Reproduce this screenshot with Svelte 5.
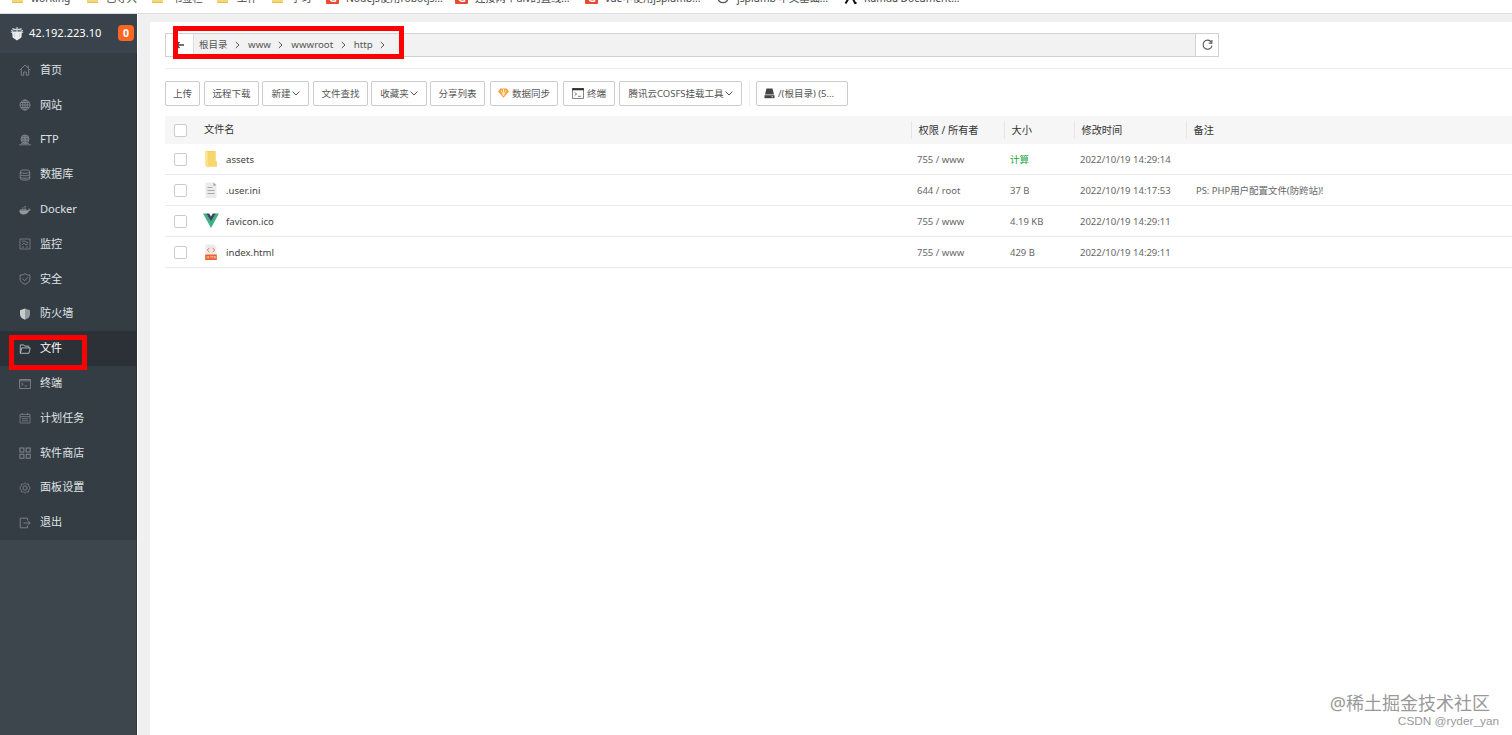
<script>
  const bookmarks = [
    { icon: 'folder', x: 12, w: 75, gap: 8, text: 'working' },
    { icon: 'folder', w: 65, gap: 8, text: '已导入' },
    { icon: 'folder', w: 65, gap: 9, text: '书签栏' },
    { icon: 'folder', w: 55, gap: 9, text: '工作' },
    { icon: 'folder', w: 54, gap: 8, text: '学习' },
    { icon: 'csdn', w: 129, gap: 7, text: 'Nodejs使用robotjs...' },
    { icon: 'csdn', w: 130, gap: 7, text: '连接两个div的直线...' },
    { icon: 'csdn', w: 132, gap: 7, text: 'vue中使用jsplumb...' },
    { icon: 'globe', w: 127, gap: 7, text: 'jsplumb 中文基础...' },
    { icon: 'ramda', w: 130, gap: 7, text: 'Ramda Document...' }
  ];
  const menu = [
    ['home', '首页'],
    ['web', '网站'],
    ['ftp', 'FTP'],
    ['db', '数据库'],
    ['docker', 'Docker'],
    ['monitor', '监控'],
    ['safe', '安全'],
    ['wall', '防火墙'],
    ['files', '文件'],
    ['term', '终端'],
    ['cron', '计划任务'],
    ['soft', '软件商店'],
    ['gear', '面板设置'],
    ['exit', '退出']
  ];
  const crumbs = ['根目录', 'www', 'wwwroot', 'http'];
  const tools = [
    { t: '上传', w: 35, m: 4 },
    { t: '远程下载', w: 55, m: 3 },
    { t: '新建', w: 47, m: 4, drop: true },
    { t: '文件查找', w: 55, m: 3 },
    { t: '收藏夹', w: 56, m: 3, drop: true },
    { t: '分享列表', w: 55, m: 5 },
    { t: '数据同步', w: 68, m: 5, icon: 'gem' },
    { t: '终端', w: 52, m: 4, icon: 'console' },
    { t: '腾讯云COSFS挂载工具', w: 123, m: 7, drop: true }
  ];
  const files = [
    { icon: 'dir', name: 'assets', own: '755 / www', size: '计算', time: '2022/10/19 14:29:14', note: '' },
    { icon: 'txt', name: '.user.ini', own: '644 / root', size: '37 B', time: '2022/10/19 14:17:53', note: 'PS: PHP用户配置文件(防跨站)!' },
    { icon: 'vue', name: 'favicon.ico', own: '755 / www', size: '4.19 KB', time: '2022/10/19 14:29:11', note: '' },
    { icon: 'html', name: 'index.html', own: '755 / www', size: '429 B', time: '2022/10/19 14:29:11', note: '' }
  ];
</script>

{#snippet chevron()}
  <svg class="chev" width="8" height="5" viewBox="0 0 8 5"><path d="M.6 .6 4 4 7.4 .6" fill="none" stroke="#555" /></svg>
{/snippet}

<div class="page">
  <div class="bookmarks">
    {#each bookmarks as b}
      <div class="bm" style:width="{b.w}px">
        <svg width={b.icon === 'folder' ? 11 : 13} height="13" viewBox="0 0 {b.icon === 'folder' ? 11 : 13} 13">
          {#if b.icon === 'folder'}
            <path d="M0 2h5l1 2h5v8H0z" fill="#f5d875" /><path d="M.5 11.500h10" stroke="#e3bd4e" />
          {:else if b.icon === 'csdn'}
            <rect width="13" height="13" rx="1" fill="#ea4a31" />
            <path d="M9.500 4.500C8 3 4 3.500 4 7c0 3.800 4 3.500 5.500 3V7.500H7" fill="none" stroke="#fff" stroke-width="1.500" />
          {:else if b.icon === 'globe'}
            <circle cx="6" cy="6.500" r="5.200" fill="#fff" stroke="#555" stroke-width="1.300" />
            <path d="M2 5l4 3M6 2l4 4-3 2" fill="none" stroke="#555" stroke-width="1.600" />
          {:else}
            <path d="M1.500 12.500 5.500 6M4 1.500h2l5 10.500h1.500" fill="none" stroke="#111" stroke-width="2" />
          {/if}
        </svg>
        <span style:margin-left="{b.gap}px">{b.text}</span>
      </div>
    {/each}
  </div>

  <div class="body">
    <aside>
      <div class="host">
        <svg width="14" height="15" viewBox="0 0 14 15">
          <path d="M2 5.500h10l-.6 6L7 14.500l-4.400-3z" fill="#e9eced" />
          <path d="M1 4.500c3-1 9-1 12 0M2.500 2.500c2.500 1 6.500 1 9 0M7 1v5M.8 6.500 3 5.500M13.200 6.500 11 5.500" fill="none" stroke="#cfd4d8" stroke-width="1.100" />
          <path d="M4.500 7v4M9.500 7v4" stroke="#c2c9ce" stroke-width=".7" />
        </svg>
        <span class="ip">42.192.223.10</span>
        <b class="count">0</b>
      </div>
      <nav>
        {#each menu as [icon, label]}
          <div class="item" class:active={icon === 'files'}>
            <svg width="12" height="12" viewBox="0 0 12 12" fill="none" stroke={icon === 'files' ? '#b9c0c3' : '#7f878c'} stroke-width=".9">
              {#if icon === 'home'}
                <path d="M.8 6.200 6 1l5.200 5.200M2.300 5.200v6h2.400V8h2.600v3.200h2.400v-6M9.200 1.300v2.500" />
              {:else if icon === 'web'}
                <circle cx="6" cy="6" r="5" /><ellipse cx="6" cy="6" rx="2.300" ry="5" /><path d="M1 6h10M1.800 3.500h8.400M1.800 8.500h8.400M6 1v10" />
              {:else if icon === 'ftp'}
                <circle cx="6" cy="5" r="4" fill="#596268" /><path d="M2.200 3.600h7.600M2 6h8M6 1v9M0 10.800h12M2 9.300h8" />
              {:else if icon === 'db'}
                <rect x="1.200" y="1" width="9.600" height="10" rx="2.500" /><path d="M1.200 3.500c2 1 7.600 1 9.600 0M1.200 6c2 1 7.600 1 9.600 0M1.200 8.500c2 1 7.600 1 9.600 0" />
              {:else if icon === 'docker'}
                <path d="M.3 6.200h8.500c1 0 1-1.200.8-2 1 .3 1 1 1 1.300h1.200c-.2 1-1 1.300-1.800 1.300C9 9.500 7 10.500 4.500 10.500 2 10.500.3 9 .3 6.200z" fill="#929a9e" stroke="none" />
                <path d="M1.500 5.500h6.500M3 4h4M5.500 2.500h1.500" stroke-width="1.200" stroke-dasharray="1.200 .4" />
              {:else if icon === 'monitor'}
                <path d="M1 1h10v10H1zM3 3.200h3.500l1 1.300H9M3 7l2-2 2 2 2-1M3 9h2M7 9h2" stroke-width=".8" />
              {:else if icon === 'safe'}
                <path d="M6 .7C4.500 2 2.500 2 1.100 2v4c0 2.500 2 4.300 4.900 5.300C8.900 10.300 10.900 8.500 10.900 6V2C9.500 2 7.500 2 6 .7zM3.600 5.700l2 2 3.200-3.300" />
              {:else if icon === 'wall'}
                <path d="M6 .5 1 2.300v4C1 9 3 10.800 6 11.700z" fill="#c8cccd" stroke="none" /><path d="M6 .5l5 1.800v4c0 2.700-2 4.500-5 5.400z" fill="#949b9f" stroke="none" />
              {:else if icon === 'files'}
                <path d="M1.300 10.300V1.900h3.500l1 1.300h4v1.700M1.300 10.300l1.500-5.400h8.400l-1.200 5.400z" /><path d="M6 3.200h4" stroke="#3bad60" />
              {:else if icon === 'term'}
                <path d="M.6 1.500h10.800v9H.6zM.6 2.800h10.800M2.500 5l1.700 1.300-1.700 1.300M5.500 8h2.500" />
              {:else if icon === 'cron'}
                <path d="M1 2.300h10V11H1zM1 4.600h10M3.300 1v2M8.700 1v2M3 6.700h6M3 8.800h6" stroke-width=".75" />
              {:else if icon === 'soft'}
                <path d="M.9 1h4v4h-4zM7.200 1h4v4h-4zM.9 7.300h4v4h-4zM7.200 7.300h4v4h-4z" stroke-width="1.050" />
              {:else if icon === 'gear'}
                <path d="M6 .8l1.500 1.300 2-.1.300 2L11.300 6 9.800 8l-.3 2-2-.1L6 11.200 4.500 9.900l-2 .1-.3-2L.7 6l1.500-2 .3-2 2 .1z" stroke-width=".75" /><circle cx="6" cy="6" r="2.200" />
              {:else}
                <path d="M8.500 3.500V1.200H1.200v9.600h7.300V8.500M4.500 6h6.500M9.200 4l2 2-2 2" />
              {/if}
            </svg>
            <span>{label}</span>
          </div>
        {/each}
      </nav>
      <div class="mark mark-menu"></div>
    </aside>

    <main>
      <div class="path">
        <div class="back"><svg width="9" height="8" viewBox="0 0 9 8"><path d="M9 4H2M4.500 1 1.500 4l3 3" fill="none" stroke="#444" stroke-width="1.500" /></svg></div>
        <div class="crumbs">
          {#each crumbs as c}
            <span class="crumb">{c}</span>
            <svg class="sep" width="5" height="8" viewBox="0 0 5 8"><path d="M.8 1 4 4 .8 7" fill="none" stroke="#555" /></svg>
          {/each}
        </div>
        <div class="reload">
          <svg width="11" height="12" viewBox="0 0 11 12"><path d="M9.300 3.100A4.500 4.500 0 1 0 10 6.600" fill="none" stroke="#555" stroke-width="1.100" /><path d="M9.900.9v3.200H6.800" fill="none" stroke="#555" stroke-width="1.100" /></svg>
        </div>
        <div class="mark mark-path"></div>
      </div>

      <div class="tools">
        {#each tools as t}
          <button style:width="{t.w}px" style:margin-right="{t.m}px">
            {#if t.icon === 'gem'}
              <svg class="ic" width="11" height="10" viewBox="0 0 11 10"><path d="M2.300.5h6.400L11 3.500 5.500 9.700 0 3.500z" fill="#f9a33a" /><path d="M3.200 2.300 5.500 8l2.300-5.700M5.500 1v7" stroke="#fff0d2" stroke-width=".9" fill="none" /></svg>
            {:else if t.icon === 'console'}
              <svg class="ic" width="12" height="11" viewBox="0 0 12 11"><path d="M.5.5h11v10H.5z" fill="#fff" stroke="#666" stroke-width=".8" /><path d="M.2 1.200h11.600" stroke="#333" stroke-width="2.200" /><path d="M2.700 4.500 4.700 6 2.700 7.500M6 8.300h2.800" stroke="#555" stroke-width=".8" fill="none" /></svg>
            {/if}
            <span>{t.t}</span>
            {#if t.drop}{@render chevron()}{/if}
          </button>
        {/each}
        <i class="bar"></i>
        <button class="disk">
          <svg width="11" height="11" viewBox="0 0 11 11"><path d="M2.500.5h6l1.500 6H1z" fill="#444" /><path d="M.5 7.200h10v3H.5z" fill="#444" /><path d="M7.500 8.800h1.500" stroke="#fff" stroke-width=".8" /></svg>
          <span>/(根目录) (5...</span>
        </button>
      </div>

      <div class="table">
        <div class="row head">
          <i class="box"></i><span>文件名</span><span>权限 / 所有者</span><span>大小</span><span>修改时间</span><span>备注</span>
        </div>
        {#each files as f}
          <div class="row">
            <i class="box"></i>
            <span class="name">
              <svg width="16" height="18" viewBox="0 0 16 18">
                {#if f.icon === 'dir'}
                  <path d="M3 1h9.500v10l1.300.5V16.500H3z" fill="#f3cf63" /><path d="M2.200.8 5.500 2v16l-3.300-2z" fill="#fce28c" /><path d="M5.500 2h7v9l1 .5v5h-8z" fill="#f8d66e" />
                {:else if f.icon === 'txt'}
                  <path d="M2.500 1.500h8l3 3V17h-11z" fill="#ebebeb" /><path d="M10.500 1.500v3h3z" fill="#999" /><path d="M4.500 6.500h5M4.500 9.500h7M4.500 12.500h7" stroke="#aaa" />
                {:else if f.icon === 'vue'}
                  <path d="M0 1.500h3.300L8 9.700l4.700-8.200H16L8 16z" fill="#3fb27f" /><path d="M3.200 1.500h3L8 4.600l1.800-3.100h3L8 9.800z" fill="#34495e" />
                {:else}
                  <path d="M2.500 1.500h8.500l2.500 2.500v13h-11z" fill="#ececec" /><path d="M2.200 11.500h11.600V17H2.200z" fill="#e8602c" /><path d="M6.500 4.800 4.300 7l2.200 2.200M9.500 4.800 11.700 7 9.500 9.200" fill="none" stroke="#e8764a" /><path d="M4 13v2.600M5.500 13v2.600M4 14.300h1.500M7 13.300h2M8 13.300v2.300M9.700 15.600v-2.400l1 1 .9-1v2.400M12.600 13v2.500" stroke="#ffd9c8" stroke-width=".55" fill="none" />
                {/if}
              </svg>
              {f.name}
            </span>
            <span>{f.own}</span>
            <span class:calc={f.size === '计算'}>{f.size}</span>
            <span>{f.time}</span>
            <span class="note">{f.note}</span>
          </div>
        {/each}
      </div>
    </main>
  </div>
  <div class="credit">
    <div class="c1">@稀土掘金技术社区</div>
    <div class="c2">CSDN @ryder_yan</div>
  </div>
</div>

<style>
  :global(body) { overflow: hidden; background: #f0f0f0; }
  .page { position: relative; width: 1512px; height: 735px; overflow: hidden; display: flex; flex-direction: column; font: 9.500px 'Noto Sans', 'Noto Sans CJK SC', sans-serif; color: #555; white-space: nowrap; }
  svg { display: block; flex: none; }
  i { display: block; }
  .bookmarks { height: 14px; box-sizing: border-box; flex: none; background: #fff; border-bottom: 1px solid #ddd; display: flex; padding-left: 12px; overflow: hidden; }
  .bm { display: flex; flex: none; align-items: flex-start; font-size: 10.300px; line-height: 14px; color: #444; }
  .bm svg { margin-top: -9px; }
  .bm span { margin-top: -9px; }
  .body { flex: 1; display: flex; min-height: 0; }
  aside { position: relative; width: 137px; flex: none; background: #3d464d; border-right: 1px solid #fff; box-shadow: inset -1px 0 #30383d; }
  .host { height: 39px; display: flex; align-items: center; padding: 0 0 1px 10px; box-sizing: border-box; color: #fff; background: #3a434b; }
  .ip { width: 89px; margin: -2px 0 0 5px; font-size: 11.100px; }
  .count { width: 16px; height: 16px; border-radius: 4px; background: #fb6722; font-size: 10.500px; line-height: 16px; text-align: center; }
  nav { background: #353d44; box-shadow: inset -1px 0 #2d3439; }
  .item { height: 34.800px; display: flex; align-items: center; padding-left: 19px; font-size: 11.100px; color: #dfe2e4; }
  .item span { margin-left: 9px; margin-top: -3px; }
  .active { background: #2b3137; color: #fff; }
  .mark { position: absolute; border: 5px solid #fe0000; box-sizing: border-box; }
  .mark-menu { left: 9px; top: 321px; width: 78px; height: 35px; }
  main { flex: 1; min-width: 0; margin: 8px 0 0 12px; padding-left: 15px; background: #fff; }
  .path { position: relative; margin-top: 11px; width: 1054px; height: 24px; box-sizing: border-box; border: 1px solid #d2d2d2; display: flex; background: #f2f2f2; }
  .back { width: 27px; background: #fff; border-right: 1px solid #ddd; display: flex; align-items: center; justify-content: center; }
  .crumbs { flex: 1; display: flex; align-items: center; padding-left: 5px; }
  .crumb { margin-top: -2px; font-size: 9.700px; }
  .crumb:first-child { font-size: 9.500px; }
  .sep { margin: -1px 8px 0 7.500px; }
  .reload { width: 22px; background: #fff; border-left: 1px solid #d2d2d2; display: flex; align-items: center; justify-content: center; }
  .mark-path { left: 7px; top: -8px; width: 231px; height: 33px; }
  .tools { margin-top: 11px; padding-top: 12px; height: 25px; border-top: 1px solid #eee; display: flex; }
  button { flex: none; height: 25px; padding: 0; box-sizing: border-box; border: 1px solid #ccc; border-radius: 2px; background: #fff; font: inherit; color: #555; display: flex; align-items: center; justify-content: center; }
  button span { margin-top: -2px; }
  .chev { margin-left: 1px; }
  .ic { margin: -1px 3px 0 0; }
  .bar { width: 1px; background: #eee; margin-right: 6px; }
  .disk { width: 92px; justify-content: flex-start; padding-left: 7px; gap: 3px; }
  .table { margin-top: 10px; }
  .row { height: 31px; box-sizing: border-box; border-bottom: 1px solid #e9e9e9; display: grid; grid-template-columns: 39px 713px 93px 70px 112px 1fr; align-items: center; color: #666; }
  .head { height: 28px; background: #f6f6f6; border: 0; font-size: 10.200px; color: #333; }
  .head span { line-height: 14px; margin-top: -2px; }
  .head span:nth-child(n + 3) { height: 18px; line-height: 18px; margin: -1px 0 0 -6px; padding-left: 6.500px; border-left: 1px solid #e6e6e6; }
  .box { width: 13px; height: 13px; box-sizing: border-box; border: 1px solid #ccc; border-radius: 2px; background: #fff; margin-left: 9px; }
  .name { display: flex; align-items: center; gap: 6px; color: #444; font-size: 9.600px; }
  .name svg { margin-left: -1px; margin-right: 1px; }
  .calc { color: #20a53a; }
  .note { margin-left: 4px; letter-spacing: -.05px; }
  .credit { position: absolute; right: 13px; top: 690px; text-align: right; color: #999; }
  .c1 { font-size: 18px; line-height: 26px; margin-right: 9px; }
  .c2 { font: 11.800px/14px 'Liberation Sans', 'Noto Sans CJK SC', sans-serif; margin-top: -2px; }
</style>
